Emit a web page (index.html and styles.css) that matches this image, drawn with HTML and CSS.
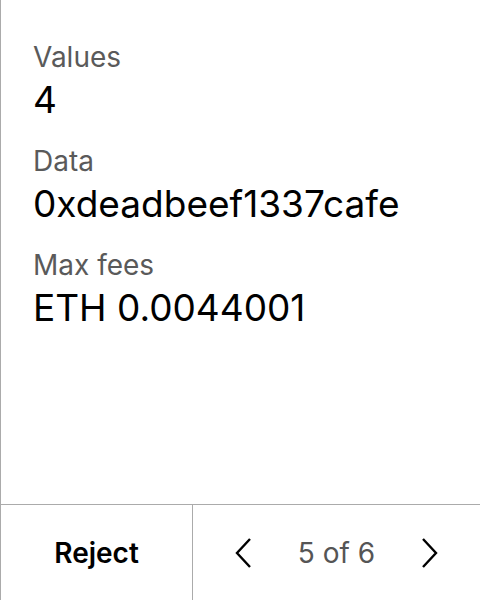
FILE: index.html
```html
<!DOCTYPE html>
<html>
<head>
<meta charset="utf-8">
<link rel="stylesheet" href="styles.css">
</head>
<body>
<div class="screen">
  <div class="content">
    <div class="field">
      <div class="label">Values</div>
      <div class="value">4</div>
    </div>
    <div class="field">
      <div class="label">Data</div>
      <div class="value">0xdeadbeef1337cafe</div>
    </div>
    <div class="field">
      <div class="label">Max fees</div>
      <div class="value">ETH 0.0044001</div>
    </div>
  </div>
  <div class="footer">
    <div class="reject">Reject</div>
    <div class="pager">
      <svg class="chev" width="18" height="32" viewBox="0 0 18 32"><path d="M16 2 L3 16 L16 30" fill="none" stroke="#000" stroke-width="2.4"/></svg>
      <span class="count">5 of 6</span>
      <svg class="chev" width="18" height="32" viewBox="0 0 18 32"><path d="M2 2 L15 16 L2 30" fill="none" stroke="#000" stroke-width="2.4"/></svg>
    </div>
  </div>
</div>
</body>
</html>
```
FILE: styles.css
```css
html, body { margin: 0; padding: 0; background: #fff; }
body { font-family: Inter, "Noto Sans", sans-serif; }
.screen {
  width: 480px; height: 600px; box-sizing: border-box;
  border-left: 1px solid #ababab;
  display: flex; flex-direction: column;
}
.content {
  flex: 1;
  padding: 40px 0 0 32px;
  display: flex; flex-direction: column; gap: 22px;
}
.label { font-size: 28px; color: #5a5a5a; line-height: 34px; }
.value { font-size: 37px; color: #000; line-height: 44px; margin-top: 4px; }
.footer {
  height: 95px; border-top: 1px solid #ababab;
  display: flex;
}
.reject {
  width: 191px; border-right: 1px solid #ababab;
  display: flex; align-items: center; justify-content: center;
  font-weight: 600; font-size: 28px; color: #000;
}
.pager {
  flex: 1; display: flex; align-items: center; justify-content: center; gap: 46px;
}
.count { font-size: 28px; color: #555; }
```
